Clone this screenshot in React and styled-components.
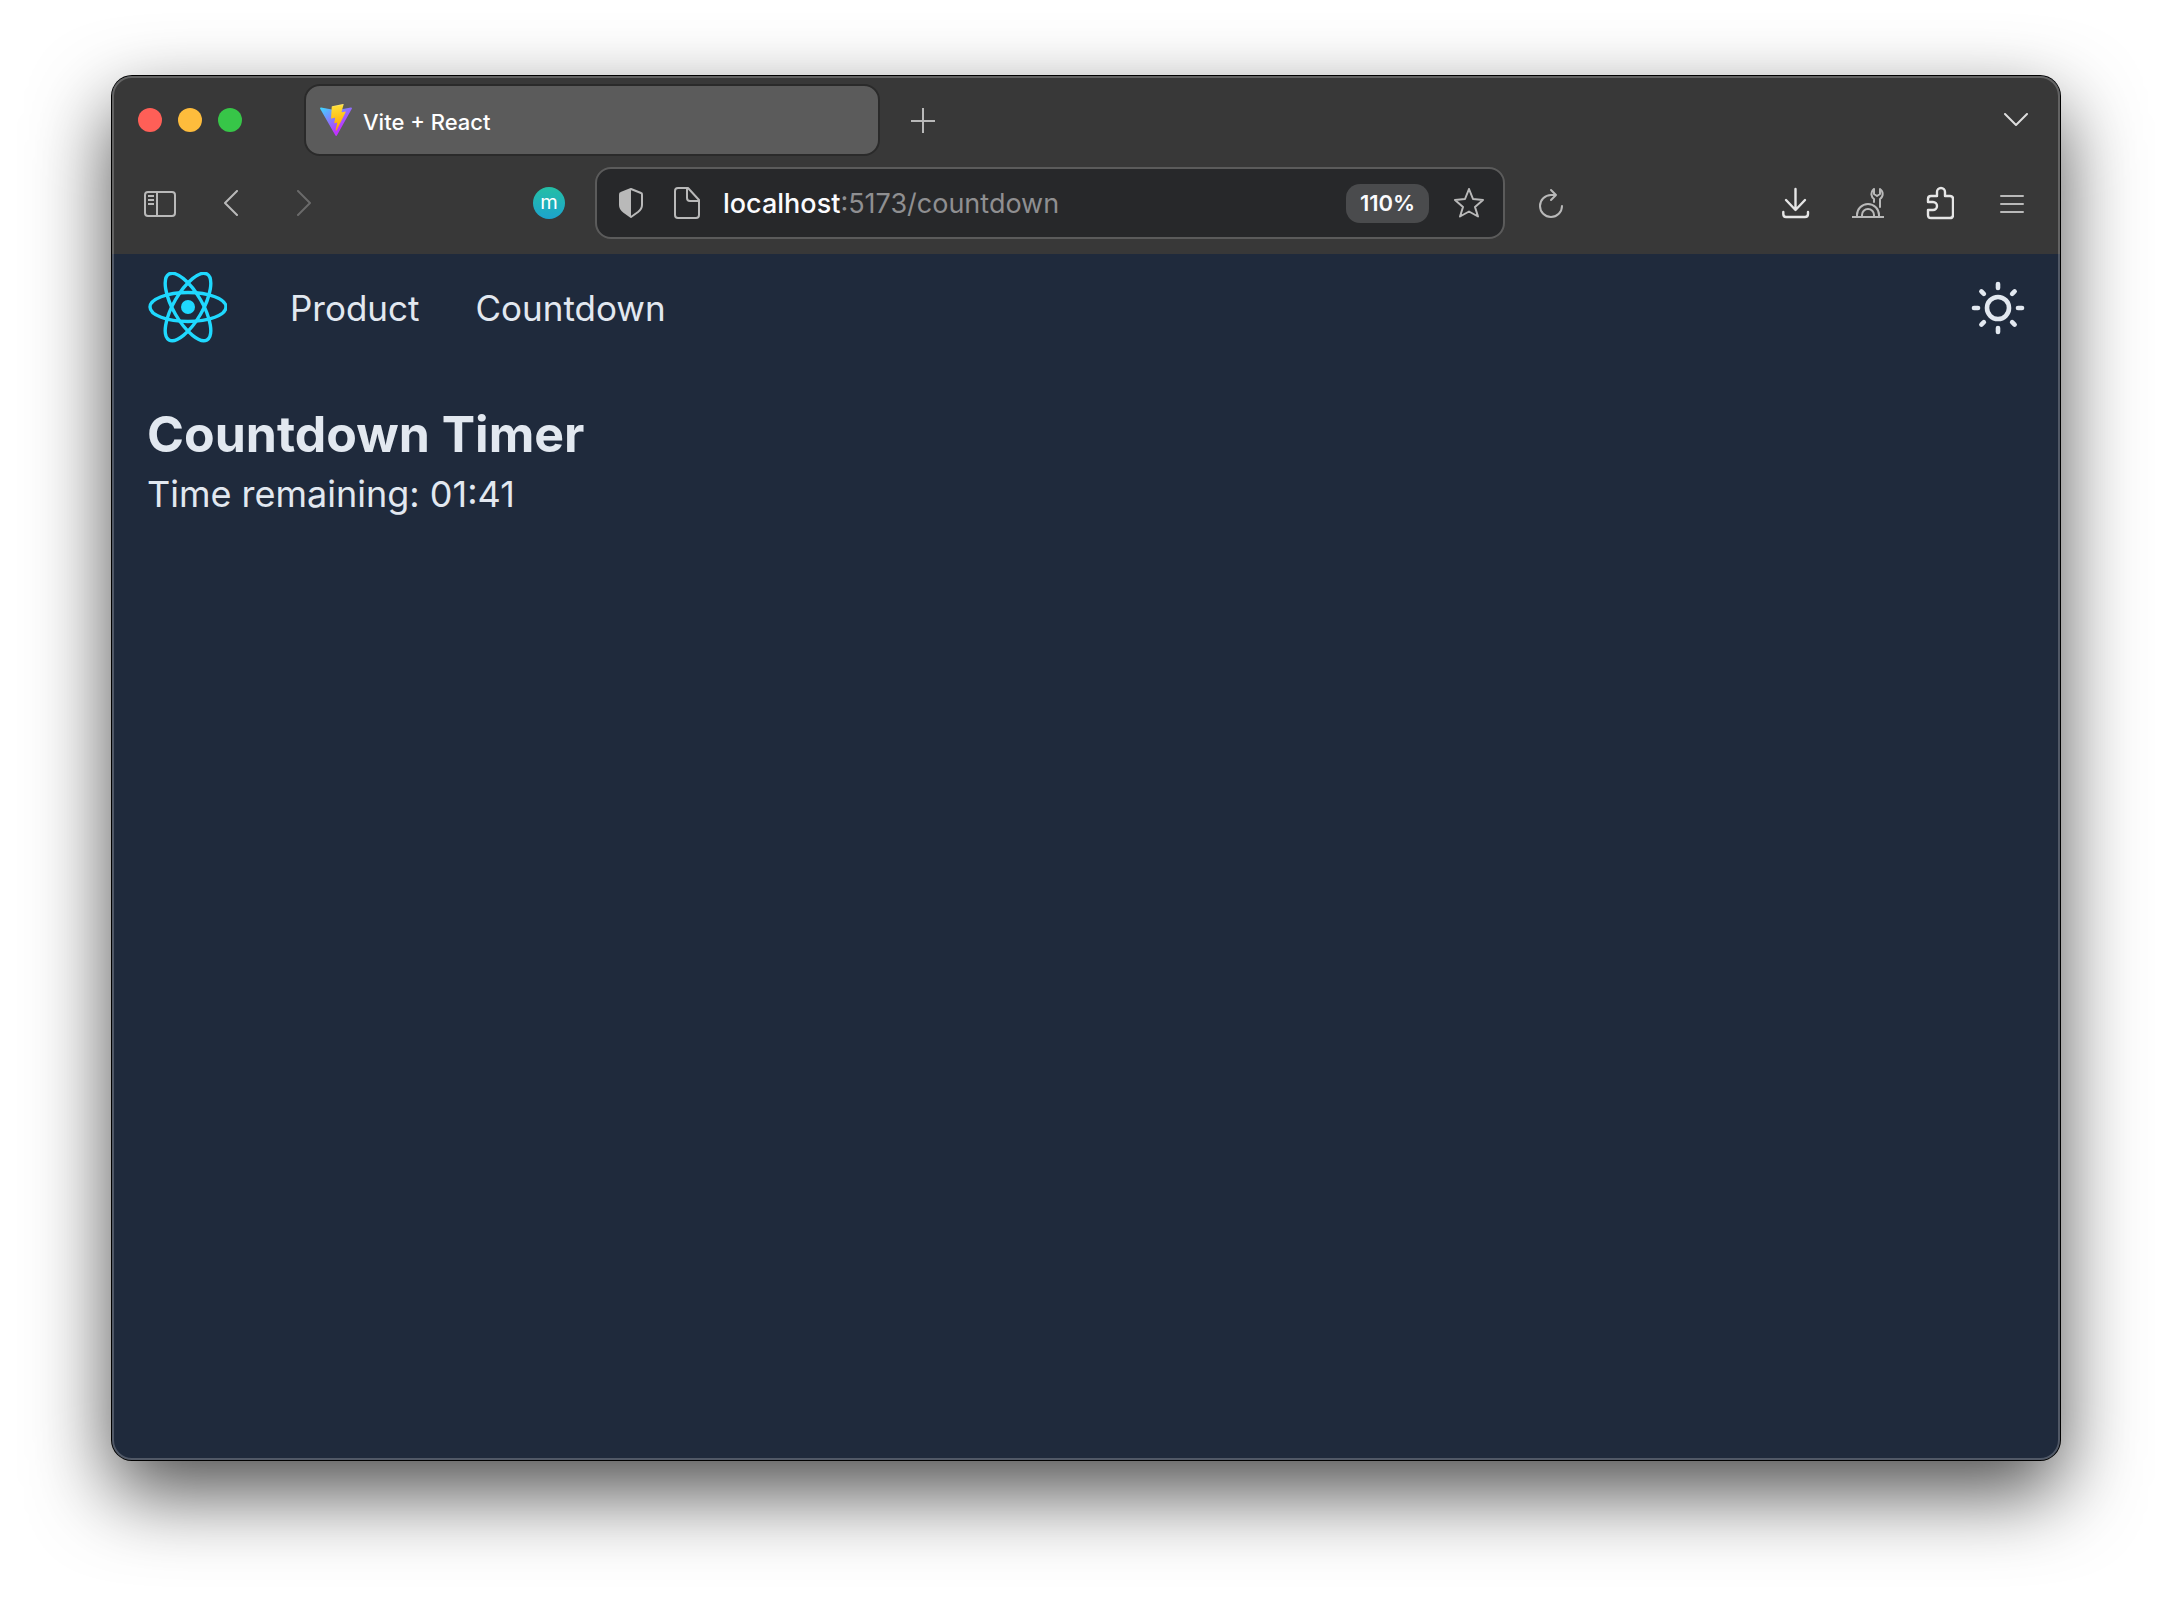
import React, { useState } from "react";
import styled, { createGlobalStyle } from "styled-components";

const GlobalStyle = createGlobalStyle`
  * { box-sizing: border-box; }
  body {
    margin: 0;
    background: #ffffff;
    font-family: Inter, "Liberation Sans", sans-serif;
    -webkit-font-smoothing: antialiased;
  }
  svg { display: block; }
`;

const Desktop = styled.div`
  display: flex;
  min-height: 100vh;
  padding: 76px 112px 148px;
  overflow: hidden;
`;

const Window = styled.div`
  position: relative;
  flex: 1;
  display: flex;
  flex-direction: column;
  border-radius: 20px;
  background: #1f2a3c;
  box-shadow:
    0 0 0 1px #000000,
    0 32px 80px rgba(0, 0, 0, 0.7);

  &::after {
    content: "";
    position: absolute;
    inset: 0;
    border: 2px solid rgba(255, 255, 255, 0.22);
    border-radius: 20px;
    pointer-events: none;
  }
`;

const Chrome = styled.div`
  background: #383838;
  border-radius: 20px 20px 0 0;
`;

const TabBar = styled.div`
  display: flex;
  align-items: center;
  padding: 8px 8px 0 26px;
`;

const Lights = styled.div`
  display: flex;
  gap: 16px;
  margin-right: 62px;
`;

const Light = styled.button`
  width: 24px;
  height: 24px;
  padding: 0;
  border: 0;
  border-radius: 50%;
  background: ${(p) => p.$color};
`;

const Tab = styled.button`
  display: flex;
  align-items: center;
  gap: 11px;
  width: 576px;
  height: 72px;
  margin-right: 7px;
  padding: 0 14px;
  border: 2px solid #2a2a2a;
  border-radius: 16px;
  background: #5b5b5b;
  color: #ffffff;
  font: 500 22px/28px Inter, "Liberation Sans", sans-serif;
`;

const TabTitle = styled.span`
  padding-top: 4px;
`;

const IconButton = styled.button`
  display: flex;
  align-items: center;
  justify-content: center;
  flex: none;
  width: ${(p) => (p.$narrow ? 56 : 72)}px;
  height: 56px;
  padding: 0;
  border: 0;
  background: transparent;
  color: ${(p) => p.$color || "#b9b9b9"};
`;

const Spacer = styled.div`
  flex: ${(p) => p.$grow || 1} 1 0;
`;

const ToolBar = styled.div`
  display: flex;
  align-items: center;
  padding: 11px 12px 15px;
`;

const Avatar = styled.span`
  display: grid;
  place-items: center;
  width: 32px;
  height: 32px;
  border-radius: 50%;
  background: linear-gradient(#24bfa5, #1ca3cd);
  color: #ffffff;
  font: 400 20px/28px Inter, "Liberation Sans", sans-serif;
  padding-bottom: 2px;
`;

const AddressBar = styled.form`
  display: flex;
  align-items: center;
  flex: 894 1 0;
  min-width: 0;
  height: 72px;
  margin: 0 10px;
  padding: 0 6px;
  border: 2px solid #5b5b5b;
  border-radius: 16px;
  background: #27282a;
  font-size: 27px;
  line-height: 36px;
`;

const Host = styled.label`
  padding: 2px 0 0 8px;
  color: #fbfbfe;
  font-weight: 500;
`;

const UrlInput = styled.input`
  flex: 1;
  min-width: 0;
  padding: 2px 0 0;
  border: 0;
  outline: 0;
  background: transparent;
  color: #8f8f91;
  font: inherit;
`;

const Zoom = styled.button`
  width: 83px;
  height: 39px;
  margin-right: 12px;
  padding: 0;
  border: 0;
  border-radius: 14px;
  background: #4a4b4d;
  color: #fbfbfe;
  font: 600 22px/28px Inter, "Liberation Sans", sans-serif;
`;

const Page = styled.div`
  padding: 0 35px;
  color: #e2e8f0;
`;

const Header = styled.header`
  display: flex;
  align-items: center;
  justify-content: space-between;
  height: 108px;
  font-size: 35px;
  line-height: 52px;
`;

const Nav = styled.nav`
  display: flex;
  align-items: center;
  gap: 56px;
`;

const HomeLink = styled.a`
  margin-right: 7px;
`;

const NavLink = styled.a`
  color: inherit;
  text-decoration: none;
`;

const ThemeToggle = styled.button`
  padding: 0;
  border: 0;
  background: transparent;
  color: inherit;
`;

const Main = styled.main`
  padding-top: 40px;
`;

const Title = styled.h1`
  margin: 0;
  font-size: 50px;
  line-height: 64px;
  font-weight: 700;
`;

const Remaining = styled.p`
  margin: 0;
  font-size: 36px;
  line-height: 56px;
`;

const Icon = ({ w, h, sw = 2, children }) => (
  <svg
    width={w}
    height={h}
    viewBox={`0 0 ${w} ${h}`}
    fill="none"
    stroke="currentColor"
    strokeWidth={sw}
    strokeLinecap="round"
    strokeLinejoin="round"
    aria-hidden="true"
  >
    {children}
  </svg>
);

const ViteLogo = () => (
  <svg width="32" height="32" viewBox="0 0 256 257" aria-hidden="true">
    <defs>
      <linearGradient id="viteA" x1="-.828%" x2="57.636%" y1="7.652%" y2="78.411%">
        <stop offset="0%" stopColor="#41D1FF" />
        <stop offset="100%" stopColor="#BD34FE" />
      </linearGradient>
      <linearGradient id="viteB" x1="43.376%" x2="50.316%" y1="2.242%" y2="89.03%">
        <stop offset="0%" stopColor="#FFEA83" />
        <stop offset="8.333%" stopColor="#FFDD35" />
        <stop offset="100%" stopColor="#FFA800" />
      </linearGradient>
    </defs>
    <path
      fill="url(#viteA)"
      d="M255.153 37.938L134.897 252.976c-2.483 4.44-8.862 4.466-11.382.048L.875 37.958c-2.746-4.814 1.371-10.646 6.827-9.67l120.385 21.517a6.537 6.537 0 0 0 2.322-.004l117.867-21.483c5.438-.991 9.574 4.796 6.877 9.62Z"
    />
    <path
      fill="url(#viteB)"
      d="M185.432.063L96.44 17.501a3.268 3.268 0 0 0-2.634 3.014l-5.474 92.456a3.268 3.268 0 0 0 3.997 3.378l24.777-5.718c2.318-.535 4.413 1.507 3.936 3.838l-7.361 36.047c-.495 2.426 1.782 4.5 4.151 3.78l15.304-4.649c2.372-.72 4.652 1.36 4.15 3.788l-11.698 56.621c-.732 3.542 3.979 5.473 5.943 2.437l1.313-2.028l72.516-144.72c1.215-2.423-.88-5.186-3.54-4.672l-25.505 4.922c-2.396.462-4.435-1.77-3.759-4.114l16.646-57.705c.677-2.35-1.37-4.583-3.769-4.113Z"
    />
  </svg>
);

const ReactLogo = () => (
  <svg width="80" height="72" viewBox="-41 -35 80 72" aria-hidden="true">
    <circle r="7" fill="#1fd9ff" />
    <g fill="none" stroke="#1fd9ff" strokeWidth="3.400">
      <ellipse rx="38" ry="14.5" />
      <ellipse rx="38" ry="14.5" transform="rotate(60)" />
      <ellipse rx="38" ry="14.5" transform="rotate(120)" />
    </g>
  </svg>
);

const SunIcon = () => (
  <svg
    width="54"
    height="54"
    viewBox="-27 -27 54 54"
    fill="none"
    stroke="currentColor"
    strokeWidth="4.6"
    strokeLinecap="round"
    aria-hidden="true"
  >
    <circle r="11" />
    {[0, 45, 90, 135, 180, 225, 270, 315].map((a) => (
      <path key={a} d={a % 90 ? "M0-20V-23.5" : "M0-20V-24"} transform={`rotate(${a})`} />
    ))}
  </svg>
);

export default function App() {
  const [path, setPath] = useState(":5173/countdown");

  return (
    <>
      <GlobalStyle />
      <Desktop>
        <Window>
          <Chrome>
            <TabBar>
              <Lights>
                <Light $color="#ff5f57" aria-label="Close" />
                <Light $color="#febc3c" aria-label="Minimize" />
                <Light $color="#37c648" aria-label="Maximize" />
              </Lights>
              <Tab>
                <ViteLogo />
                <TabTitle>Vite + React</TabTitle>
              </Tab>
              <IconButton aria-label="New tab">
                <Icon w={26} h={26}>
                  <path strokeLinecap="butt" d="M13 1V26M1 14H25" />
                </Icon>
              </IconButton>
              <Spacer />
              <IconButton $color="#dddddd" aria-label="List all tabs">
                <Icon w={24} h={14}>
                  <path d="M1 1L12 12L23 1" />
                </Icon>
              </IconButton>
            </TabBar>
            <ToolBar>
              <IconButton aria-label="Sidebar">
                <Icon w={32} h={28}>
                  <rect x="1" y="3" width="30" height="24" rx="3" />
                  <path strokeLinecap="butt" d="M13 3V27M4 7H10M4 11H10M4 15H10" />
                </Icon>
              </IconButton>
              <IconButton aria-label="Back">
                <Icon w={16} h={26}>
                  <path d="M13 1L1 13L13 25" />
                </Icon>
              </IconButton>
              <IconButton $color="#6a6a6a" aria-label="Forward">
                <Icon w={16} h={26}>
                  <path d="M2 1L14 13L2 25" />
                </Icon>
              </IconButton>
              <Spacer $grow={173} />
              <IconButton aria-label="Account">
                <Avatar>m</Avatar>
              </IconButton>
              <AddressBar onSubmit={(e) => e.preventDefault()}>
                <IconButton $narrow type="button" aria-label="Tracking protection">
                  <Icon w={24} h={30}>
                    <path d="M12 1L22 5Q23 5 23 7V17Q23 21 19 24L12 29L5 24Q1 21 1 17V7Q1 5 2 5Z" />
                    <path fill="currentColor" stroke="none" d="M12 1L2 5Q1 5 1 7V17Q1 21 5 24L12 29Z" />
                  </Icon>
                </IconButton>
                <IconButton $narrow type="button" aria-label="Site information">
                  <Icon w={26} h={32}>
                    <path d="M4 1H14L25 13V28Q25 31 22 31H4Q1 31 1 28V4Q1 1 4 1Z" />
                    <path d="M13 1V11Q13 14 16 14H25" />
                  </Icon>
                </IconButton>
                <Host htmlFor="url">localhost</Host>
                <UrlInput id="url" value={path} onChange={(e) => setPath(e.target.value)} />
                <Zoom type="button">110%</Zoom>
                <IconButton $narrow type="button" aria-label="Bookmark">
                  <Icon w={32} h={30}>
                    <path d="M16 1L20 11L30 12L22 19L25 28.500L16 23.500L7 28.500L10 19L2 12L12 11Z" />
                  </Icon>
                </IconButton>
              </AddressBar>
              <IconButton aria-label="Reload">
                <Icon w={26} h={32}>
                  <path d="M24 19A11 11 0 1 1 13 8H18M13 3L18 8L13 13" />
                </Icon>
              </IconButton>
              <Spacer $grow={173} />
              <IconButton $color="#e6e6e6" aria-label="Downloads">
                <Icon w={28} h={32} sw={2.4}>
                  <path d="M13.500 2V22M4 13L13.500 23L23 13M1.300 25V27Q1.300 30 4 30H23Q26 30 26 27V25" />
                </Icon>
              </IconButton>
              <IconButton aria-label="Developer tools">
                <Icon w={32} h={30}>
                  <path strokeLinecap="butt" d="M0 29H32" />
                  <path d="M5 28V27A11 11 0 0 1 27 27V28M10 28V27A6 6 0 0 1 22 27V28" />
                  <path d="M22 14V11A6 6 0 0 1 21 2L22 1V6L25 8L28 6V1A6 6 0 0 1 28 11V19" />
                </Icon>
              </IconButton>
              <IconButton $color="#e6e6e6" aria-label="Extensions">
                <Icon w={28} h={34} sw={2.4}>
                  <path d="M5 10H11V6A4 4 0 0 1 19 6V10H24Q27 10 27 13V29Q27 32 24 32H5Q2 32 2 29V24H7A4 4 0 0 0 7 16H2V13Q2 10 5 10Z" />
                </Icon>
              </IconButton>
              <IconButton aria-label="Menu">
                <Icon w={24} h={20}>
                  <path d="M1 3H23M1 11H23M1 19H23" />
                </Icon>
              </IconButton>
            </ToolBar>
          </Chrome>
          <Page>
            <Header>
              <Nav>
                <HomeLink href="#home" aria-label="Home">
                  <ReactLogo />
                </HomeLink>
                <NavLink href="#product">Product</NavLink>
                <NavLink href="#countdown">Countdown</NavLink>
              </Nav>
              <ThemeToggle aria-label="Toggle theme">
                <SunIcon />
              </ThemeToggle>
            </Header>
            <Main>
              <Title>Countdown Timer</Title>
              <Remaining>Time remaining: 01:41</Remaining>
            </Main>
          </Page>
        </Window>
      </Desktop>
    </>
  );
}
